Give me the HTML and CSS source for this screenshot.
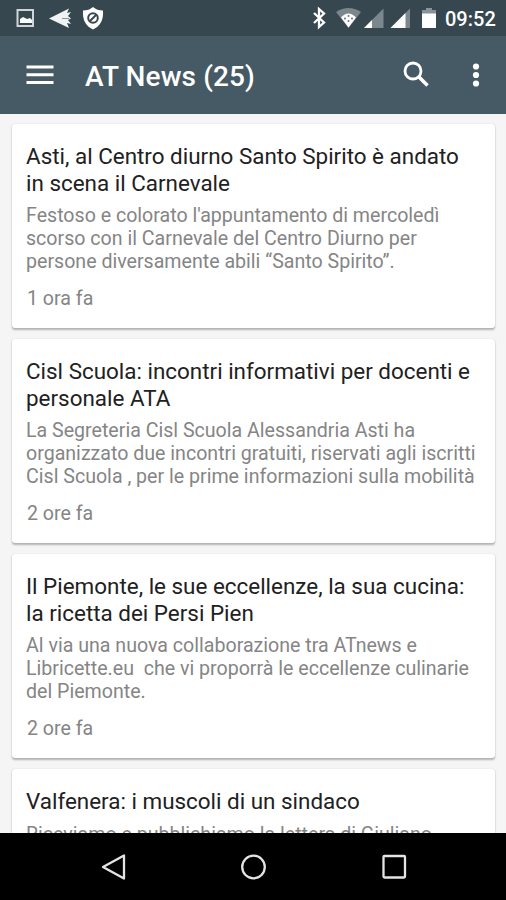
FILE: index.html
```html
<!DOCTYPE html>
<html lang="it"><head><meta charset="utf-8"><title>AT News</title><link rel="stylesheet" href="styles.css"></head>
<body>
<div class="status">
<svg class="status-left" width="110" height="36" viewBox="0 0 110 36"><path d="M17.500 10h15.500v16h-15.500z" fill="none" stroke="#cfd5d8" stroke-width="2"/><path d="M20 23v-4l3-2 4 2 3-1 2 2v3z" fill="#fff"/><path d="M49 18.500L69 8.500l-2 4.500 4-1-3 4 3 2.500-3 1.500 3 4-4-1 2 5z" fill="#f0f2f3"/><path d="M62 18.500h7" stroke="#87939a" stroke-width="1"/><path d="M93 7q4 3.500 10 3.500 1 14-10 19-11-5-10-19 6 0 10-3.500z" fill="#fff"/><circle cx="93" cy="18" r="4.800" fill="none" stroke="#37474f" stroke-width="2"/><path d="M90 21l6-6" fill="none" stroke="#37474f" stroke-width="2"/></svg>
<svg class="status-right" width="130" height="36" viewBox="310 0 130 36"><path d="M314 13l10 9.500-5 4.500V9l5 4.500-10 9.500" fill="none" stroke="#fff" stroke-width="2.300"/><path d="M336 12q12.500-8 25 0L348.500 28z" fill="#7b878d"/><path d="M341 17.500q7.500-8 15 0l-7.500 10z" fill="#fff"/><g fill="#64727a"><circle cx="345" cy="18.500" r="1"/><circle cx="348.500" cy="16" r="1"/><circle cx="352" cy="18.500" r="1"/><circle cx="348.500" cy="21" r="1"/></g><path d="M364 28h19.500V8.500z" fill="#7b878d"/><path d="M364 28h8v-8z" fill="#fff"/><path d="M390.500 28H410V8.500z" fill="#7b878d"/><path d="M390.500 28h15V13z" fill="#fff"/><path d="M422 10h4V8h6v2h4v4h-14z" fill="#87939a"/><path d="M422 13.500h14V28h-14z" fill="#fff"/></svg>
<span class="clock">09:52</span>
</div>
<header class="bar"><svg width="28" height="20" viewBox="0 0 28 20"><path d="M.5 2h27M.5 9.800h27M.5 17.500h27" stroke="#fff" stroke-width="2.900"/></svg><h1>AT News (25)</h1><svg class="search" width="28" height="28" viewBox="0 0 28 28"><circle cx="11" cy="10" r="8" fill="none" stroke="#fff" stroke-width="2.800"/><path d="M16.500 15.500l9 9" stroke="#fff" stroke-width="3.500"/></svg><svg class="more" width="8" height="26" viewBox="0 0 8 26"><g fill="#fff"><circle cx="4" cy="4.500" r="3.100"/><circle cx="4" cy="13" r="3.100"/><circle cx="4" cy="21.500" r="3.100"/></g></svg></header>
<main class="feed">
<article class="card"><h2><span>Asti, al Centro diurno Santo Spirito è andato</span><span>in scena il Carnevale</span></h2><p><span>Festoso e colorato l'appuntamento di mercoledì</span><span>scorso con il Carnevale del Centro Diurno per</span><span>persone diversamente abili “Santo Spirito”.</span></p><time>1 ora fa</time></article>
<article class="card"><h2><span>Cisl Scuola: incontri informativi per docenti e</span><span>personale ATA</span></h2><p><span>La Segreteria Cisl Scuola Alessandria Asti ha</span><span>organizzato due incontri gratuiti, riservati agli iscritti</span><span>Cisl Scuola , per le prime informazioni sulla mobilità</span></p><time>2 ore fa</time></article>
<article class="card"><h2><span>Il Piemonte, le sue eccellenze, la sua cucina:</span><span>la ricetta dei Persi Pien</span></h2><p><span>Al via una nuova collaborazione tra ATnews e</span><span>Libricette.eu&nbsp; che vi proporrà le eccellenze culinarie</span><span>del Piemonte.</span></p><time>2 ore fa</time></article>
<article class="card"><h2><span>Valfenera: i muscoli di un sindaco</span></h2><p><span>Riceviamo e pubblichiamo la lettera di Giuliano</span></p></article>
</main>
<nav class="nav"><svg width="506" height="67" viewBox="0 833 506 67"><g fill="none" stroke="#e4e4e4" stroke-width="2.300" stroke-linejoin="round"><path d="M103 867l21-11.500v23z"/><circle cx="253.500" cy="867" r="11.300"/><rect x="383.500" y="856" width="21.500" height="21.500" rx="1"/></g></svg></nav>
</body></html>
```
FILE: styles.css
```css
*{box-sizing:border-box;margin:0;padding:0}
body{width:506px;height:900px;overflow:hidden;display:flex;flex-direction:column;background:#f5f5f5;font-family:Roboto,sans-serif}
svg{display:block;flex:none}
.status{height:36px;flex:none;display:flex;background:#37474f;color:#fff}
.status-right{margin-left:200px}
.clock{font-size:20px;font-weight:500;line-height:38px;margin-left:5px}
.bar{height:78px;flex:none;display:flex;align-items:center;background:#455a64;color:#fff;padding:0 26px}
h1{font-size:28px;font-weight:500;letter-spacing:.12px;margin-left:31px;padding-top:2px}
.search{margin-left:auto}
.more{margin-left:42px}
.feed{flex:1;min-height:0;overflow:hidden;padding:9.500px 11px 0 12px;display:flex;flex-direction:column;gap:11.300px}
.card{flex:none;height:204px;background:#fff;border-radius:3px;padding:19px 14px;box-shadow:0 1.500px 2px #0004,0 0 1px #0002}
.card span{display:block;white-space:nowrap}
h2{font-size:22.430px;font-weight:400;line-height:27px;color:#212121}
p{font-size:19.600px;line-height:23px;color:#858585;margin-top:7.300px}
time{display:block;font-size:19.600px;line-height:23px;color:#858585;margin:14px 0 0 1px}
.nav{height:67px;flex:none;background:#000}
```
